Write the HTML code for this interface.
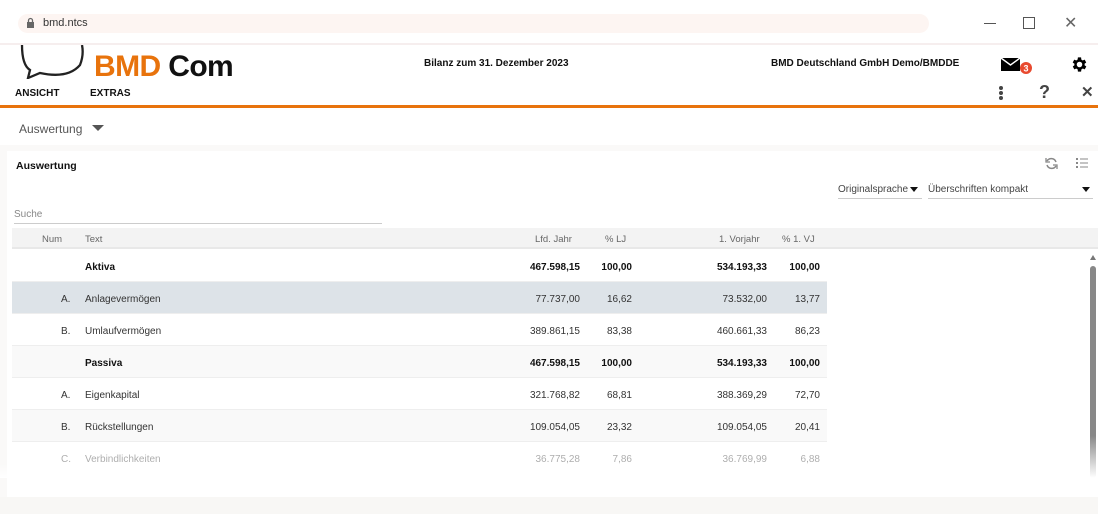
<!DOCTYPE html><html><head><meta charset="utf-8"><style>
*{margin:0;padding:0;box-sizing:border-box}
body{width:1098px;height:514px;overflow:hidden;background:#fff;font-family:"Liberation Sans",Arial,sans-serif;position:relative;color:#222}
.a{position:absolute}
.t{font-size:10px;white-space:nowrap}
.row{position:absolute;left:12px;width:815px;height:32px;border-bottom:1px solid #eee}
.row span{position:absolute;top:12px;font-size:10px;color:#333}
.b span{font-weight:bold;color:#111}
.r{text-align:right}
</style></head><body>
<div class="a" style="left:18px;top:14px;width:911px;height:19px;border-radius:10px;background:#fdf5f2"></div>
<svg class="a" style="left:26px;top:17px" width="9" height="11"><rect x="1" y="5" width="7" height="6" fill="#666"/><path d="M2.5 5V3.5a2 2 0 0 1 4 0V5" stroke="#666" fill="none" stroke-width="1.3"/></svg>
<div class="a t" style="left:43px;top:17px;font-size:11px;color:#333">bmd.ntcs</div>
<div class="a" style="left:984px;top:23px;width:12px;height:1px;background:#555"></div>
<div class="a" style="left:1023px;top:17px;width:12px;height:12px;border:1px solid #555"></div>
<div class="a" style="left:1064px;top:13px;font-size:16px;color:#666">✕</div>
<div class="a" style="left:0;top:43px;width:1098px;height:2px;background:#f6eeee"></div>
<svg class="a" style="left:18px;top:45px" width="70" height="34"><path d="M4 0 Q4 20 12 25 L10 33 L22 28 Q50 34 62 20 Q66 10 64 0" fill="none" stroke="#222" stroke-width="2.3"/></svg>
<div class="a" style="left:94px;top:50px;font-size:30px;font-weight:bold;color:#e8730c;letter-spacing:-0.6px">BMD <span style="color:#111">Com</span></div>
<div class="a t" style="left:15px;top:88px;font-weight:bold;color:#111">ANSICHT</div>
<div class="a t" style="left:90px;top:88px;font-weight:bold;color:#111">EXTRAS</div>
<div class="a t" style="left:424px;top:58px;font-weight:bold;color:#111">Bilanz zum 31. Dezember 2023</div>
<div class="a t" style="left:771px;top:58px;font-weight:bold;color:#111">BMD Deutschland GmbH Demo/BMDDE</div>
<svg class="a" style="left:1000px;top:56px" width="34" height="20"><rect x="1" y="2" width="19" height="13" fill="#000"/><path d="M1 2l9.5 7 9.5-7" stroke="#fff" stroke-width="1.4" fill="none"/><circle cx="26" cy="12" r="6" fill="#e84a2f"/><text x="26" y="15.5" font-size="9" font-weight="bold" fill="#fff" text-anchor="middle" font-family="Liberation Sans">3</text></svg>
<svg class="a" style="left:1070px;top:55px" width="19" height="19" viewBox="0 0 24 24"><path fill="#000" d="M19.4 13a7.5 7.5 0 0 0 0-2l2.1-1.6-2-3.5-2.5 1a7 7 0 0 0-1.7-1L15 3h-4l-.4 2.9a7 7 0 0 0-1.7 1l-2.5-1-2 3.5L6.6 11a7.5 7.5 0 0 0 0 2l-2.1 1.6 2 3.5 2.5-1a7 7 0 0 0 1.7 1L11 21h4l.4-2.9a7 7 0 0 0 1.7-1l2.5 1 2-3.5zM13 15.5A3.5 3.5 0 1 1 13 8.5a3.5 3.5 0 0 1 0 7z" transform="translate(-1 0)"/></svg>
<svg class="a" style="left:998px;top:85px" width="6" height="16"><circle cx="3" cy="3" r="2" fill="#444"/><circle cx="3" cy="8" r="2" fill="#444"/><circle cx="3" cy="13" r="2" fill="#444"/></svg>
<div class="a" style="left:1039px;top:82px;font-size:18px;font-weight:bold;color:#444">?</div>
<div class="a" style="left:1081px;top:83px;font-size:15px;font-weight:bold;color:#444">✕</div>
<div class="a" style="left:0;top:105px;width:1098px;height:3px;background:#e8730c"></div>
<div class="a t" style="left:19px;top:122px;font-size:12px;color:#555">Auswertung</div>
<div class="a" style="left:92px;top:125px;border:6px solid transparent;border-top:6px solid #555;border-bottom:0"></div>
<div class="a" style="left:0;top:145px;width:1098px;height:6px;background:#faf9f8"></div>
<div class="a" style="left:0;top:151px;width:7px;height:346px;background:#faf9f8"></div>
<div class="a t" style="left:16px;top:160px;font-weight:bold;color:#111;font-size:10.5px">Auswertung</div>
<svg class="a" style="left:1045px;top:157px" width="13" height="13"><path d="M11 5A5 5 0 0 0 2 4M2 8a5 5 0 0 0 9 1" stroke="#888" stroke-width="1.5" fill="none"/><path d="M1 1v4h4M12 12V8H8" stroke="#888" stroke-width="1.3" fill="none"/></svg>
<svg class="a" style="left:1076px;top:158px" width="12" height="10"><g fill="#888"><rect x="0" y="0" width="2" height="2"/><rect x="0" y="4" width="2" height="2"/><rect x="0" y="8" width="2" height="2"/><rect x="4" y="0.5" width="8" height="1"/><rect x="4" y="4.5" width="8" height="1"/><rect x="4" y="8.5" width="8" height="1"/></g></svg>
<div class="a t" style="left:838px;top:184px;color:#444">Originalsprache</div>
<div class="a" style="left:910px;top:187px;border:4px solid transparent;border-top:5px solid #111;border-bottom:0"></div>
<div class="a" style="left:838px;top:198px;width:84px;height:1px;background:#ccc"></div>
<div class="a t" style="left:928px;top:184px;color:#444">Überschriften kompakt</div>
<div class="a" style="left:1082px;top:187px;border:4px solid transparent;border-top:5px solid #111;border-bottom:0"></div>
<div class="a" style="left:928px;top:198px;width:165px;height:1px;background:#ccc"></div>
<div class="a t" style="left:14px;top:209px;color:#888">Suche</div>
<div class="a" style="left:14px;top:223px;width:368px;height:1px;background:#ccc"></div>
<div class="a" style="left:12px;top:228px;width:1086px;height:21px;background:#f3f3f3;border-bottom:2px solid #e8e8e8"></div>
<div class="a t" style="left:42px;top:234px;color:#666;font-size:9.5px">Num</div>
<div class="a t" style="left:85px;top:234px;color:#666;font-size:9.5px">Text</div>
<div class="a t" style="left:535px;top:234px;color:#666;font-size:9.5px">Lfd. Jahr</div>
<div class="a t" style="left:605px;top:234px;color:#666;font-size:9.5px">% LJ</div>
<div class="a t" style="left:719px;top:234px;color:#666;font-size:9.5px">1. Vorjahr</div>
<div class="a t" style="left:782px;top:234px;color:#666;font-size:9.5px">% 1. VJ</div>

<div class="row b" style="top:250px"><span style="left:73px">Aktiva</span><span class="r" style="right:247px">467.598,15</span><span class="r" style="right:195px">100,00</span><span class="r" style="right:60px">534.193,33</span><span class="r" style="right:7px">100,00</span></div>
<div class="row" style="top:282px;background:#dde3e8"><span style="left:49px">A.</span><span style="left:73px">Anlagevermögen</span><span class="r" style="right:247px">77.737,00</span><span class="r" style="right:195px">16,62</span><span class="r" style="right:60px">73.532,00</span><span class="r" style="right:7px">13,77</span></div>
<div class="row" style="top:314px"><span style="left:49px">B.</span><span style="left:73px">Umlaufvermögen</span><span class="r" style="right:247px">389.861,15</span><span class="r" style="right:195px">83,38</span><span class="r" style="right:60px">460.661,33</span><span class="r" style="right:7px">86,23</span></div>
<div class="row b" style="top:346px;background:#f9f9f9"><span style="left:73px">Passiva</span><span class="r" style="right:247px">467.598,15</span><span class="r" style="right:195px">100,00</span><span class="r" style="right:60px">534.193,33</span><span class="r" style="right:7px">100,00</span></div>
<div class="row" style="top:378px"><span style="left:49px">A.</span><span style="left:73px">Eigenkapital</span><span class="r" style="right:247px">321.768,82</span><span class="r" style="right:195px">68,81</span><span class="r" style="right:60px">388.369,29</span><span class="r" style="right:7px">72,70</span></div>
<div class="row" style="top:410px;background:#f9f9f9"><span style="left:49px">B.</span><span style="left:73px">Rückstellungen</span><span class="r" style="right:247px">109.054,05</span><span class="r" style="right:195px">23,32</span><span class="r" style="right:60px">109.054,05</span><span class="r" style="right:7px">20,41</span></div>
<div class="row" style="top:442px;opacity:.4;border:0"><span style="left:49px">C.</span><span style="left:73px">Verbindlichkeiten</span><span class="r" style="right:247px">36.775,28</span><span class="r" style="right:195px">7,86</span><span class="r" style="right:60px">36.769,99</span><span class="r" style="right:7px">6,88</span></div>
<div class="a" style="left:0;top:464px;width:1098px;height:14px;background:linear-gradient(rgba(255,255,255,0),#fff)"></div>
<div class="a" style="left:1090px;top:255px;border:3px solid transparent;border-bottom:5px solid #777;border-top:0"></div>
<div class="a" style="left:1090px;top:266px;width:6px;height:212px;border-radius:3px;background:linear-gradient(#888 80%,#fff)"></div>
<div class="a" style="left:0;top:497px;width:1098px;height:17px;background:#f8f7f5"></div>
</body></html>
